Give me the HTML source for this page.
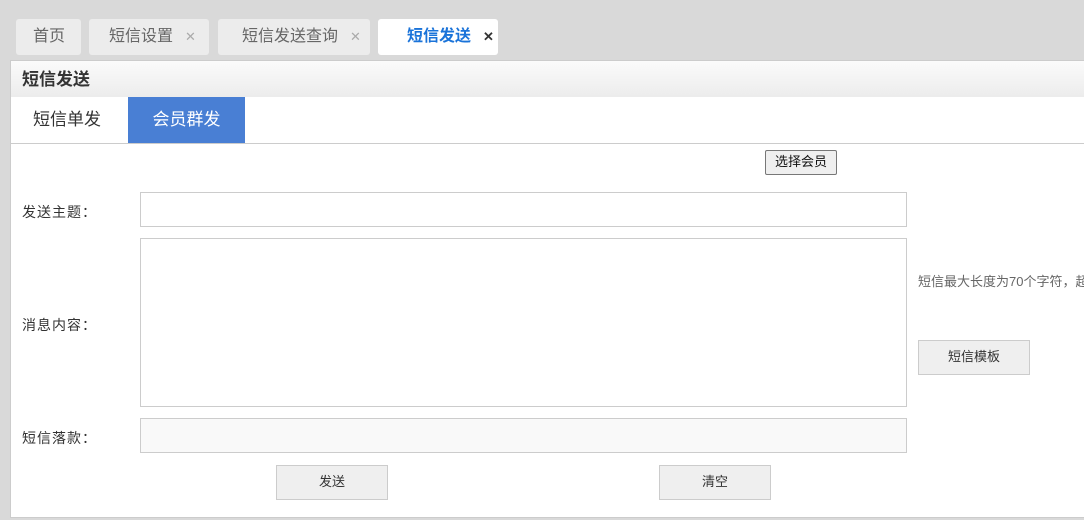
<!DOCTYPE html><html><head><meta charset="utf-8"><style>
body{margin:0;width:1084px;height:520px;overflow:hidden;background:#d9d9d9;font-family:"Liberation Sans","Noto Sans CJK SC",sans-serif;position:relative}
.a{position:absolute;box-sizing:border-box}
.tab{top:19px;height:36px;background:#ececec;border-radius:3px;color:#666;font-size:16px;line-height:36px;padding-left:17px;white-space:nowrap}
.tab i{font-style:normal;color:#aaa;margin-left:12px;font-size:13px}
.lbl{left:22px;font-size:14px;color:#333;letter-spacing:1px}
.inp{left:140px;width:767px;border:1px solid #ccc;background:#fff}
.btn{background:#efefef;border:1px solid #ccc;font-size:13px;color:#333;text-align:center;line-height:32px;height:35px;width:112px}
</style></head><body>
<div class="a tab" style="left:16px;width:65px">首页</div>
<div class="a tab" style="left:89px;width:120px;padding-left:20px">短信设置<i>✕</i></div>
<div class="a tab" style="left:218px;width:152px;padding-left:24px">短信发送查询<i>✕</i></div>
<div class="a tab" style="left:378px;width:120px;background:#fff;color:#1a73d9;font-weight:bold;padding-left:29px">短信发送<i style="color:#333;font-weight:bold;margin-left:12px">✕</i></div>
<div class="a" style="left:10px;top:60px;width:1080px;height:458px;background:#fff;border:1px solid #ccc"></div>
<div class="a" style="left:11px;top:61px;width:1073px;height:36px;background:linear-gradient(#fbfbfb,#ececec);font-size:17px;font-weight:bold;color:#333;line-height:38px;padding-left:11px">短信发送</div>
<div class="a" style="left:11px;top:143px;width:1073px;height:1px;background:#ccc"></div>
<div class="a" style="left:33px;top:97px;height:46px;line-height:46px;font-size:17px;color:#333">短信单发</div>
<div class="a" style="left:128px;top:97px;width:117px;height:46px;background:#497fd4;color:#fff;line-height:46px;font-size:17px;text-align:center">会员群发</div>
<div class="a" style="left:765px;top:150px;width:72px;height:25px;background:#efefef;border:1px solid #777;border-radius:2px;font-size:13px;text-align:center;line-height:22px;color:#111">选择会员</div>
<div class="a lbl" style="top:202px">发送主题：</div>
<div class="a inp" style="top:192px;height:35px"></div>
<div class="a lbl" style="top:315px">消息内容：</div>
<div class="a inp" style="top:238px;height:169px"></div>
<div class="a" style="left:918px;top:271px;font-size:13px;color:#666;white-space:nowrap">短信最大长度为70个字符，超</div>
<div class="a btn" style="left:918px;top:340px">短信模板</div>
<div class="a lbl" style="top:428px">短信落款：</div>
<div class="a inp" style="top:418px;height:35px;background:#f9f9f9"></div>
<div class="a btn" style="left:276px;top:465px">发送</div>
<div class="a btn" style="left:659px;top:465px">清空</div>
</body></html>
